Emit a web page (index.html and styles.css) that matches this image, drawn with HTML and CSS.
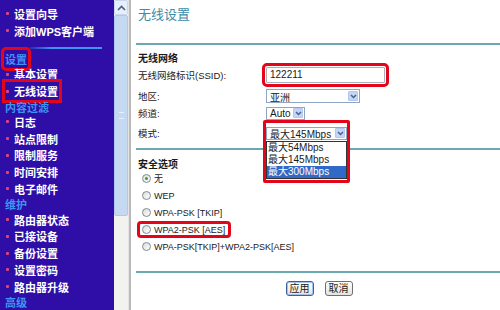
FILE: index.html
```html
<!DOCTYPE html>
<html lang="zh-CN">
<head>
    <meta charset="UTF-8">
    <meta name="viewport" content="width=device-width, initial-scale=1.0">
    <title>无线设置</title>
    <link rel="stylesheet" href="styles.css">
</head>
<body>
    <div class="menu">
        <div class="item">设置向导</div>
        <div class="item">添加WPS客户端</div>
        <div class="sep"></div>
        <div class="group"><span class="mark">设置</span></div>
        <div class="item">基本设置</div>
        <div class="item"><span class="mark-item">无线设置</span></div>
        <div class="group">内容过滤</div>
        <div class="item">日志</div>
        <div class="item">站点限制</div>
        <div class="item">限制服务</div>
        <div class="item">时间安排</div>
        <div class="item">电子邮件</div>
        <div class="group">维护</div>
        <div class="item">路由器状态</div>
        <div class="item">已接设备</div>
        <div class="item">备份设置</div>
        <div class="item">设置密码</div>
        <div class="item">路由器升级</div>
        <div class="group">高级</div>
    </div>

    <div class="scroll">
        <div class="scroll-up">
            <svg width="9" height="6" viewBox="0 0 9 6"><path d="M1 5 L4.5 1.5 L8 5" fill="none" stroke="#4d6185" stroke-width="1.6"/></svg>
        </div>
        <div class="scroll-thumb"><span class="grip"></span></div>
        <div class="scroll-track"></div>
    </div>

    <div class="main">
        <h1 class="title">无线设置</h1>
        <div class="rule"></div>

        <div class="heading">无线网络</div>
        <div class="row ssid">
            <label class="label">无线网络标识(SSID):</label>
            <div class="input">122211</div>
        </div>
        <div class="row region">
            <label class="label">地区:</label>
            <div class="select w-region">
                <span class="value">亚洲</span>
                <span class="arrow"><svg width="7" height="5" viewBox="0 0 7 5"><path d="M1 1 L3.5 3.5 L6 1" fill="none" stroke="#4d6185" stroke-width="1.5"/></svg></span>
            </div>
        </div>
        <div class="row channel">
            <label class="label">频道:</label>
            <div class="select w-channel">
                <span class="value">Auto</span>
                <span class="arrow"><svg width="7" height="5" viewBox="0 0 7 5"><path d="M1 1 L3.5 3.5 L6 1" fill="none" stroke="#4d6185" stroke-width="1.5"/></svg></span>
            </div>
        </div>
        <div class="row mode">
            <label class="label">模式:</label>
            <div class="combo">
                <div class="select w-mode">
                    <span class="value">最大145Mbps</span>
                    <span class="arrow"><svg width="7" height="5" viewBox="0 0 7 5"><path d="M1 1 L3.5 3.5 L6 1" fill="none" stroke="#4d6185" stroke-width="1.5"/></svg></span>
                </div>
                <ul class="list">
                    <li>最大54Mbps</li>
                    <li>最大145Mbps</li>
                    <li class="active">最大300Mbps</li>
                </ul>
                <div class="callout"></div>
            </div>
        </div>

        <div class="rule rule-mid"></div>

        <div class="heading heading-sec">安全选项</div>
        <div class="radio-row"><span class="radio checked"></span>无</div>
        <div class="radio-row"><span class="radio"></span>WEP</div>
        <div class="radio-row"><span class="radio"></span>WPA-PSK [TKIP]</div>
        <div class="radio-row"><span class="mark-radio"><span class="radio"></span>WPA2-PSK [AES]</span></div>
        <div class="radio-row"><span class="radio"></span>WPA-PSK[TKIP]+WPA2-PSK[AES]</div>

        <div class="rule rule-end"></div>

        <div class="buttons">
            <button class="btn btn-default" type="button">应用</button>
            <button class="btn" type="button">取消</button>
        </div>
    </div>
</body>
</html>
```

FILE: styles.css
```css
html, body {
    margin: 0;
    height: 100%;
}
body {
    display: flex;
    height: 310px;
    overflow: hidden;
    background-color: #FFFFFF;
    font-family: "Liberation Sans", "Noto Sans CJK SC", sans-serif;
}

/* left menu */
.menu {
    width: 114px;
    flex-shrink: 0;
    background-color: #2e0ea6;
    padding-top: 5.5px;
    box-sizing: border-box;
    font-weight: bold;
    font-size: 11px;
}
.item {
    display: flex;
    align-items: center;
    height: 16.75px;
    padding-left: 6px;
    color: #FFFFFF;
    white-space: nowrap;
}
.item::before {
    content: "";
    width: 3px;
    height: 3px;
    margin-right: 5px;
    background-color: #d9467a;
    border-radius: 1px;
}
.group {
    display: flex;
    align-items: center;
    height: 14px;
    padding-left: 5px;
    color: #3e94f2;
}
.sep {
    height: 2px;
    margin: 8px 12px 3px 30px;
    background: linear-gradient(to right, rgba(62, 148, 242, 0.2), #3e94f2 30%);
}
.mark {
    outline: 3px solid #e3061b;
    outline-offset: 1px;
    border-radius: 1px;
}
.mark-item {
    outline: 3px solid #e3061b;
    outline-offset: 1px;
    margin-left: -8px;
    padding-left: 8px;
}

/* scrollbar */
.scroll {
    width: 14px;
    flex-shrink: 0;
    display: flex;
    flex-direction: column;
    background-color: #f2f2ee;
    border-right: 1px solid #e6e6e6;
}
.scroll-up {
    height: 15px;
    display: flex;
    align-items: center;
    justify-content: center;
    background-color: #e7effb;
    border: 1px solid #c7d7ef;
    box-sizing: border-box;
    border-radius: 2px;
}
.scroll-thumb {
    height: 201px;
    display: flex;
    align-items: center;
    justify-content: center;
    background-color: #c6d9f3;
    border: 1px solid #b2c8ea;
    box-sizing: border-box;
    border-radius: 2px;
}
.grip {
    width: 5px;
    height: 5px;
    border-top: 1px solid #e8f0fb;
    border-bottom: 1px solid #e8f0fb;
}
.scroll-track {
    flex: 1;
}

/* content */
.main {
    flex: 1;
    border-left: 2px solid #b9b9b9;
    padding-left: 7px;
    font-size: 9.5px;
    color: #1a1a1a;
}
.title {
    margin: 0;
    padding-top: 7px;
    height: 16px;
    line-height: 16px;
    font-size: 13px;
    font-weight: normal;
    color: #3d8ba6;
}
.rule {
    height: 2px;
    margin-top: 20px;
    margin-left: -2px;
    background-color: #6aa8b2;
}
.rule-mid {
    margin-top: 6px;
}
.rule-end {
    margin-top: 16px;
}
.heading {
    display: flex;
    align-items: center;
    height: 14px;
    margin-top: 5px;
    font-weight: bold;
    font-size: 10px;
}
.heading-sec {
    margin-top: 6px;
}
.row {
    display: flex;
    align-items: center;
}
.label {
    width: 128px;
    flex-shrink: 0;
}
.ssid {
    height: 22px;
}
.region {
    height: 18px;
    margin-top: 1px;
}
.channel {
    height: 16px;
}
.mode {
    height: 18px;
    margin-top: 3px;
}
.input {
    width: 119px;
    height: 16px;
    box-sizing: border-box;
    border: 1px solid #a9b0b8;
    padding-left: 3px;
    line-height: 14px;
    outline: 3px solid #e3061b;
    outline-offset: 1px;
    border-radius: 1px;
    font-size: 10px;
}
.select {
    display: flex;
    align-items: center;
    justify-content: space-between;
    box-sizing: border-box;
    border: 1px solid #8ea6c4;
    padding: 0 1px 0 3px;
    background-color: #FFFFFF;
}
.w-region {
    width: 94px;
    height: 14px;
}
.w-channel {
    width: 39px;
    height: 13px;
}
.w-mode {
    width: 81px;
    height: 13px;
}
.value {
    font-size: 10px;
    white-space: nowrap;
}
.arrow {
    width: 10px;
    height: 10px;
    display: flex;
    align-items: center;
    justify-content: center;
    background-color: #c3d5f8;
    border: 1px solid #b3c7ef;
    box-sizing: border-box;
    border-radius: 1px;
}
.combo {
    position: relative;
}
.list {
    position: absolute;
    top: 14px;
    left: 0;
    width: 81px;
    margin: 0;
    padding: 0;
    list-style: none;
    box-sizing: border-box;
    border: 1px solid #333333;
    background-color: #FFFFFF;
    font-size: 10px;
}
.list li {
    height: 12px;
    line-height: 12px;
    padding-left: 1px;
    white-space: nowrap;
}
.list .active {
    background-color: #3169c6;
    color: #FFFFFF;
}
.callout {
    position: absolute;
    left: -3px;
    right: -3px;
    top: -7px;
    height: 63px;
    border: 3px solid #e3061b;
    box-sizing: border-box;
    border-radius: 2px;
}
.radio-row {
    display: flex;
    align-items: center;
    height: 17px;
    padding-left: 2px;
    font-size: 9px;
}
.radio {
    width: 9px;
    height: 9px;
    margin: 0 3px 0 2px;
    box-sizing: border-box;
    border: 1px solid #7d8a99;
    border-radius: 50%;
    background: linear-gradient(135deg, #dcdcd6, #ffffff);
    position: relative;
}
.checked::after {
    content: "";
    position: absolute;
    left: 2px;
    top: 2px;
    width: 3px;
    height: 3px;
    border-radius: 50%;
    background-color: #2da42d;
}
.mark-radio {
    display: flex;
    align-items: center;
    height: 11px;
    padding-right: 3px;
    outline: 3px solid #e3061b;
    outline-offset: 0;
    border-radius: 1px;
}
.buttons {
    display: flex;
    justify-content: center;
    gap: 11px;
    margin-top: 8px;
}
.btn {
    font-family: "Liberation Sans", "Noto Sans CJK SC", sans-serif;
    font-size: 10px;
    height: 15px;
    padding: 0 3px;
    line-height: 12px;
    border: 1px solid #6f6f6f;
    border-radius: 3px;
    background: linear-gradient(#ffffff, #e4e4dc);
    color: #1a1a1a;
}
.btn-default {
    border-color: #3b5f9e;
    box-shadow: inset 0 0 0 1px #a9c2ea;
}
```
